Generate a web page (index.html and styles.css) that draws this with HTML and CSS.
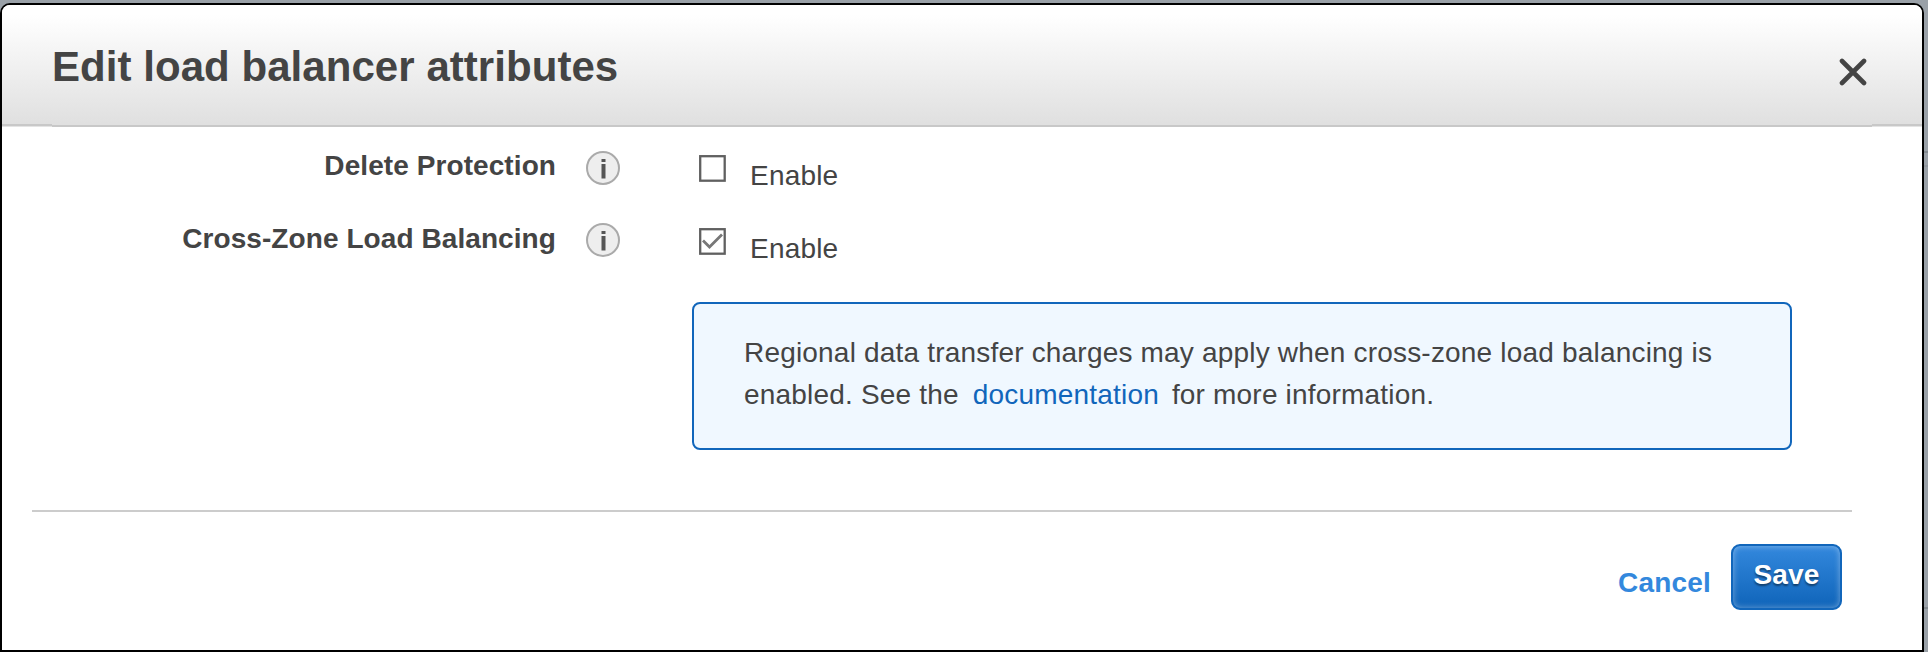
FILE: index.html
```html
<!DOCTYPE html>
<html lang="en">
<head>
<meta charset="utf-8">
<title>Edit load balancer attributes</title>
<link rel="stylesheet" href="styles.css">
</head>
<body>
<div class="backdrop">
  <section class="dialog" role="dialog" aria-labelledby="title">
    <header class="header">
      <h1 class="title" id="title">Edit load balancer attributes</h1>
      <svg class="close" viewBox="0 0 28 28"><path d="M3 3L25 25M25 3L3 25"/></svg>
    </header>
    <div class="body">
      <div class="row">
        <span class="label">Delete Protection</span>
        <svg class="info" viewBox="0 0 34 34"><circle cx="17" cy="17" r="16"/><path d="M15.500 8h4v3h-4zM15.500 13h4v14.500h-4z"/></svg>
        <svg class="check" viewBox="0 0 27 27"><rect x="1.200" y="1.200" width="24.500" height="24.500"/></svg>
        <span class="option">Enable</span>
      </div>
      <div class="row row-second">
        <span class="label">Cross-Zone Load Balancing</span>
        <svg class="info" viewBox="0 0 34 34"><circle cx="17" cy="17" r="16"/><path d="M15.500 8h4v3h-4zM15.500 13h4v14.500h-4z"/></svg>
        <svg class="check" viewBox="0 0 27 27"><rect x="1.200" y="1.200" width="24.500" height="24.500"/><path d="M4 12.500L10.500 19L23 6.500"/></svg>
        <span class="option">Enable</span>
      </div>
      <p class="notice">Regional data transfer charges may apply when cross-zone load balancing is enabled. See the <a class="link">documentation</a> for more information.</p>
    </div>
    <footer class="footer">
      <a class="cancel">Cancel</a>
      <button class="save">Save</button>
    </footer>
  </section>
  <div class="page-edge"></div>
</div>
</body>
</html>
```

FILE: styles.css
```css
* { box-sizing: border-box; }
body {
  margin: 0;
  font: 28px/42px "Liberation Sans", Arial, sans-serif;
  color: #444;
  letter-spacing: 0.2px;
}
.backdrop {
  display: flex;
  width: 1928px;
  height: 652px;
  padding-top: 3px;
  overflow: hidden;
  background: #9aa1a8;
}
.dialog {
  width: 1924px;
  height: 649px;
  border: 2px solid #000;
  border-radius: 10px 10px 0 0;
  background: #fff;
}
.page-edge {
  width: 4px;
  height: 649px;
  background:
    linear-gradient(#838a90, #838a90) 0 148px / 4px 2px no-repeat,
    linear-gradient(#90979e, #90979e) 0 162px / 4px 2px no-repeat,
    linear-gradient(#838a90, #838a90) 0 604px / 4px 2px no-repeat;
}
.header {
  display: flex;
  justify-content: space-between;
  align-items: flex-start;
  height: 122px;
  padding: 0 55px 0 50px;
  border-radius: 8px 8px 0 0;
  background:
    linear-gradient(#c8c8c8, #c8c8c8) 50px 120px / 1820px 2px no-repeat,
    linear-gradient(#c8c8c8 2px, #e4e4e4 2px) 0 119px / 50px 3px no-repeat,
    linear-gradient(#c8c8c8 2px, #e4e4e4 2px) 100% 119px / 50px 3px no-repeat,
    linear-gradient(#fff, #fff 8%, #dfdfdf);
}
.title {
  margin: 38px 0 0;
  font-size: 42px;
  line-height: 48px;
  letter-spacing: 0.05px;
}
.close {
  width: 28px;
  height: 28px;
  margin-top: 53px;
  fill: none;
  stroke: #444;
  stroke-width: 4.6;
  stroke-linecap: round;
}
.body {
  height: 383px;
  padding-top: 18px;
}
.row {
  display: flex;
  align-items: flex-start;
  height: 73px;
}
.label {
  width: 554px;
  font-weight: bold;
  letter-spacing: 0.08px;
  text-align: right;
}
.info {
  width: 34px;
  height: 34px;
  margin: 6px 79px 0 30px;
  fill: #555;
}
.info circle {
  fill: #eee;
  stroke: #aaa;
  stroke-width: 2;
}
.row-second .info { margin-top: 5px; }
.check {
  width: 27px;
  height: 27px;
  margin: 10px 24px 0 0;
  fill: none;
  stroke: #606060;
  stroke-width: 2.3;
}
.check path {
  stroke: #777;
  stroke-width: 2.8;
}
.option { margin-top: 10px; }
.notice {
  width: 1100px;
  height: 148px;
  margin: 11px 0 0 690px;
  padding: 28px 50px 0;
  border: 2px solid #1166bb;
  border-radius: 8px;
  background: #f0f8ff;
  letter-spacing: 0.19px;
}
.link {
  margin: 0 5px 0 6px;
  color: #1166bb;
}
.footer {
  display: flex;
  justify-content: flex-end;
  width: 1820px;
  margin-left: 30px;
  padding: 32px 10px 0 0;
  border-top: 2px solid #ccc;
}
.cancel {
  margin: 18px 20px 0 0;
  font-weight: bold;
  color: #3388dd;
}
.save {
  width: 111px;
  height: 66px;
  padding: 0 0 4px;
  border: 2px solid #1166bb;
  border-radius: 9px;
  background: linear-gradient(#3388dd, #1166bb 95%);
  box-shadow: inset 0 0 6px rgba(255, 255, 255, 0.4);
  color: #fff;
  font: bold 28px/42px "Liberation Sans", Arial, sans-serif;
  letter-spacing: 0.2px;
  text-shadow: 0 2px 2px rgba(0, 0, 0, 0.45);
}
```
